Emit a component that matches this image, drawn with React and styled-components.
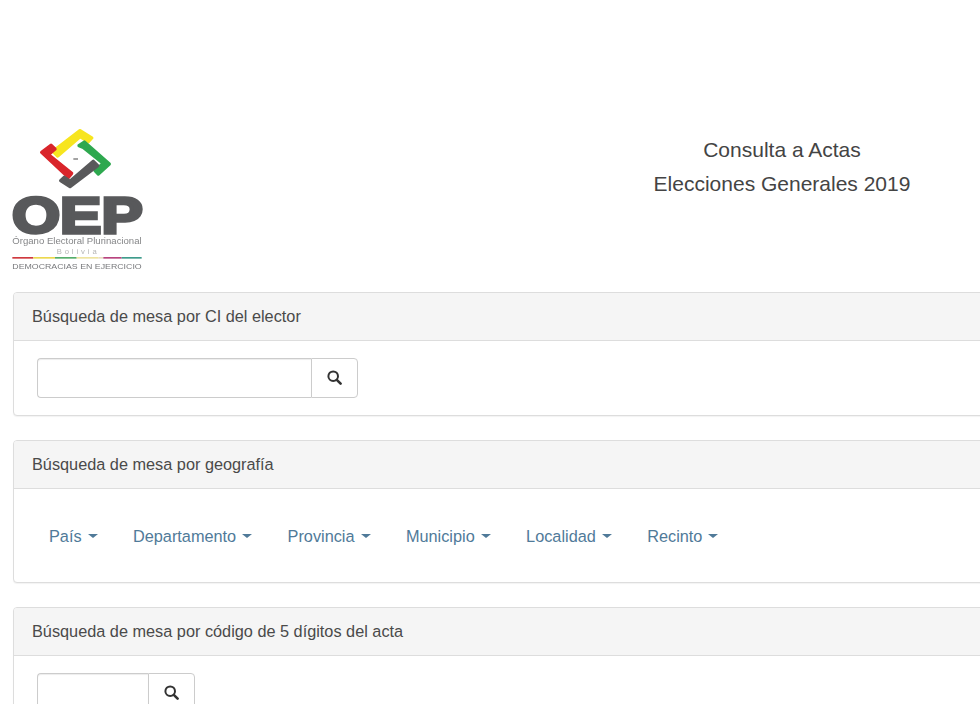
import React from "react";
import styled, { createGlobalStyle } from "styled-components";

const GlobalStyle = createGlobalStyle`
  html, body {
    margin: 0;
    background: #fff;
    overflow: hidden;
    height: 704px;
  }
  body {
    font-family: "Liberation Sans", Arial, sans-serif;
    color: #333;
  }
`;

const Page = styled.div`
  width: 1100px;
  padding-top: 120px;
`;

const Top = styled.header`
  display: flex;
  height: 172px;
`;

const LogoBox = styled.div`
  width: 160px;
  height: 160px;
  flex: none;
  filter: blur(0.4px);
`;

const Title = styled.div`
  width: 1244px;
  flex: none;
  padding-top: 13px;
  text-align: center;
  font-size: 21px;
  line-height: 34px;
  color: #444;
`;

const Panels = styled.div`
  margin-left: 13px;
  display: flex;
  flex-direction: column;
  gap: 24px;
`;

const Panel = styled.section`
  border: 1px solid #ddd;
  border-radius: 4px;
  background: #fff;
  box-shadow: 0 1px 1px rgba(0, 0, 0, 0.05);
`;

const PanelHeading = styled.div`
  height: 48px;
  box-sizing: border-box;
  padding-left: 18px;
  line-height: 47px;
  font-size: 16.3px;
  color: #4a4a4a;
  background: #f5f5f5;
  border-bottom: 1px solid #ddd;
  border-radius: 3px 3px 0 0;
`;

const PanelBody = styled.div`
  padding: 17px 23px;
`;

const InputGroup = styled.div`
  display: flex;
  width: ${(props) => props.width}px;
  height: 40px;
  box-sizing: border-box;
`;

const Input = styled.input`
  flex: 1;
  min-width: 0;
  box-sizing: border-box;
  border: 1px solid #ccc;
  border-right: none;
  border-radius: 4px 0 0 4px;
  box-shadow: inset 0 1px 1px rgba(0, 0, 0, 0.075);
  outline: none;
`;

const SearchButton = styled.button`
  width: 47px;
  flex: none;
  display: flex;
  align-items: center;
  justify-content: center;
  background: #fff;
  color: #333;
  border: 1px solid #ccc;
  border-radius: 0 4px 4px 0;
  padding: 0 0 2px;
`;

const NavBody = styled.div`
  height: 93px;
  box-sizing: border-box;
  padding: 27px 35px 0;
`;

const Nav = styled.nav`
  display: flex;
  gap: 35.4px;
  height: 40px;
  align-items: center;
`;

const NavLink = styled.a`
  display: flex;
  align-items: center;
  gap: 6px;
  font-size: 16.3px;
  color: #507a99;
  text-decoration: none;
`;

const Caret = styled.span`
  width: 0;
  height: 0;
  border-top: 4px solid #507a99;
  border-left: 5px solid transparent;
  border-right: 5px solid transparent;
`;

const SearchIcon = () => (
  <svg width="15" height="15" viewBox="0 0 15 15" fill="none" stroke="#333">
    <circle cx="6.2" cy="6.2" r="4.8" strokeWidth="2" />
    <line x1="9.8" y1="9.8" x2="13.6" y2="13.6" strokeWidth="2.6" strokeLinecap="round" />
  </svg>
);

const Logo = () => (
  <svg width="160" height="160" viewBox="0 0 480 480" fill="none">
    <g strokeWidth="10" strokeLinejoin="round">
      <polygon points="159,94 240,32 275,54 265,65 240,50 173,108" fill="#f7e51f" stroke="#f7e51f" />
      <polygon points="125,97 153,76 165,87 145,104 215,160 205,172" fill="#d9252b" stroke="#d9252b" />
      <polygon points="237,77 253,66 328,132 295,162 285,152 310,130 250,82" fill="#2ea84f" stroke="#2ea84f" />
      <polygon points="280,124 293,137 210,200 182,182 193,172 210,184" fill="#59595b" stroke="#59595b" />
    </g>
    <rect x="220" y="115" width="14" height="4" fill="#777" />
    <text
      x="36"
      y="338"
      textLength="392"
      lengthAdjust="spacingAndGlyphs"
      fontFamily="'Liberation Sans', sans-serif"
      fontWeight="700"
      fontSize="152"
      fill="#58595b"
      stroke="#58595b"
      strokeWidth="10"
    >
      OEP
    </text>
    <text
      x="37"
      y="373"
      textLength="388"
      lengthAdjust="spacingAndGlyphs"
      fontFamily="'Liberation Sans', sans-serif"
      fontSize="27"
      fill="#858688"
    >
      Órgano Electoral Plurinacional
    </text>
    <text
      x="170"
      y="402"
      textLength="120"
      fontFamily="'Liberation Sans', sans-serif"
      fontSize="23"
      fill="#b5b5b5"
    >
      Bolivia
    </text>
    <rect x="37" y="411" width="63" height="5" fill="#cf3a3f" />
    <rect x="100" y="411" width="65" height="5" fill="#ecd84f" />
    <rect x="165" y="411" width="65" height="5" fill="#55ad6b" />
    <rect x="230" y="411" width="65" height="5" fill="#eee3a0" />
    <rect x="295" y="411" width="15" height="5" fill="#e8dcc0" />
    <rect x="310" y="411" width="55" height="5" fill="#b8457f" />
    <rect x="365" y="411" width="60" height="5" fill="#3f9c8c" />
    <text
      x="37"
      y="446"
      textLength="388"
      lengthAdjust="spacingAndGlyphs"
      fontFamily="'Liberation Sans', sans-serif"
      fontSize="23"
      fill="#77787b"
    >
      DEMOCRACIAS EN EJERCICIO
    </text>
  </svg>
);

const SearchInput = ({ width }) => (
  <InputGroup width={width}>
    <Input type="text" />
    <SearchButton type="button">
      <SearchIcon />
    </SearchButton>
  </InputGroup>
);

const places = ["País", "Departamento", "Provincia", "Municipio", "Localidad", "Recinto"];

export default function App() {
  return (
    <Page>
      <GlobalStyle />
      <Top>
        <LogoBox>
          <Logo />
        </LogoBox>
        <Title>
          <div>Consulta a Actas</div>
          <div>Elecciones Generales 2019</div>
        </Title>
      </Top>
      <Panels>
        <Panel>
          <PanelHeading>Búsqueda de mesa por CI del elector</PanelHeading>
          <PanelBody>
            <SearchInput width={321} />
          </PanelBody>
        </Panel>
        <Panel>
          <PanelHeading>Búsqueda de mesa por geografía</PanelHeading>
          <NavBody>
            <Nav>
              {places.map((place) => (
                <NavLink href="#" key={place}>
                  {place}
                  <Caret />
                </NavLink>
              ))}
            </Nav>
          </NavBody>
        </Panel>
        <Panel>
          <PanelHeading>Búsqueda de mesa por código de 5 dígitos del acta</PanelHeading>
          <PanelBody>
            <SearchInput width={158} />
          </PanelBody>
        </Panel>
      </Panels>
    </Page>
  );
}
